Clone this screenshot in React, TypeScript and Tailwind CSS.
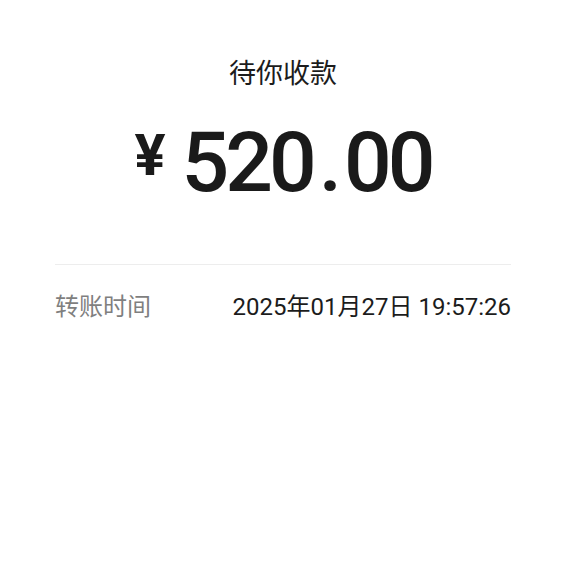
export default function App() {
  return (
    <div className="min-h-[566px] bg-white px-[55px] font-['Roboto','Noto_Sans_CJK_SC',sans-serif]">
      <div className="pt-[59px] text-center text-[27px] leading-[30px] text-[#1c1c1c]">待你收款</div>

      {/* amount */}
      <div className="mt-[32px] flex items-start justify-center text-[#1a1a1a]">
        <span className="mt-[5px] mr-[16px] text-[58px] font-bold leading-none">¥</span>
        <span className="text-[84px] font-medium leading-none tracking-[-4px]">
          520<span className="mx-[6px]">.</span>00
        </span>
      </div>

      <div className="mt-[59px] border-t border-[#ededed]" />

      <div className="flex items-center justify-between py-[26px] text-[24px] leading-[32px]">
        <span className="text-[#7f7f7f]">转账时间</span>
        <span className="text-[#1c1c1c]">2025年01月27日 19:57:26</span>
      </div>
    </div>
  );
}
